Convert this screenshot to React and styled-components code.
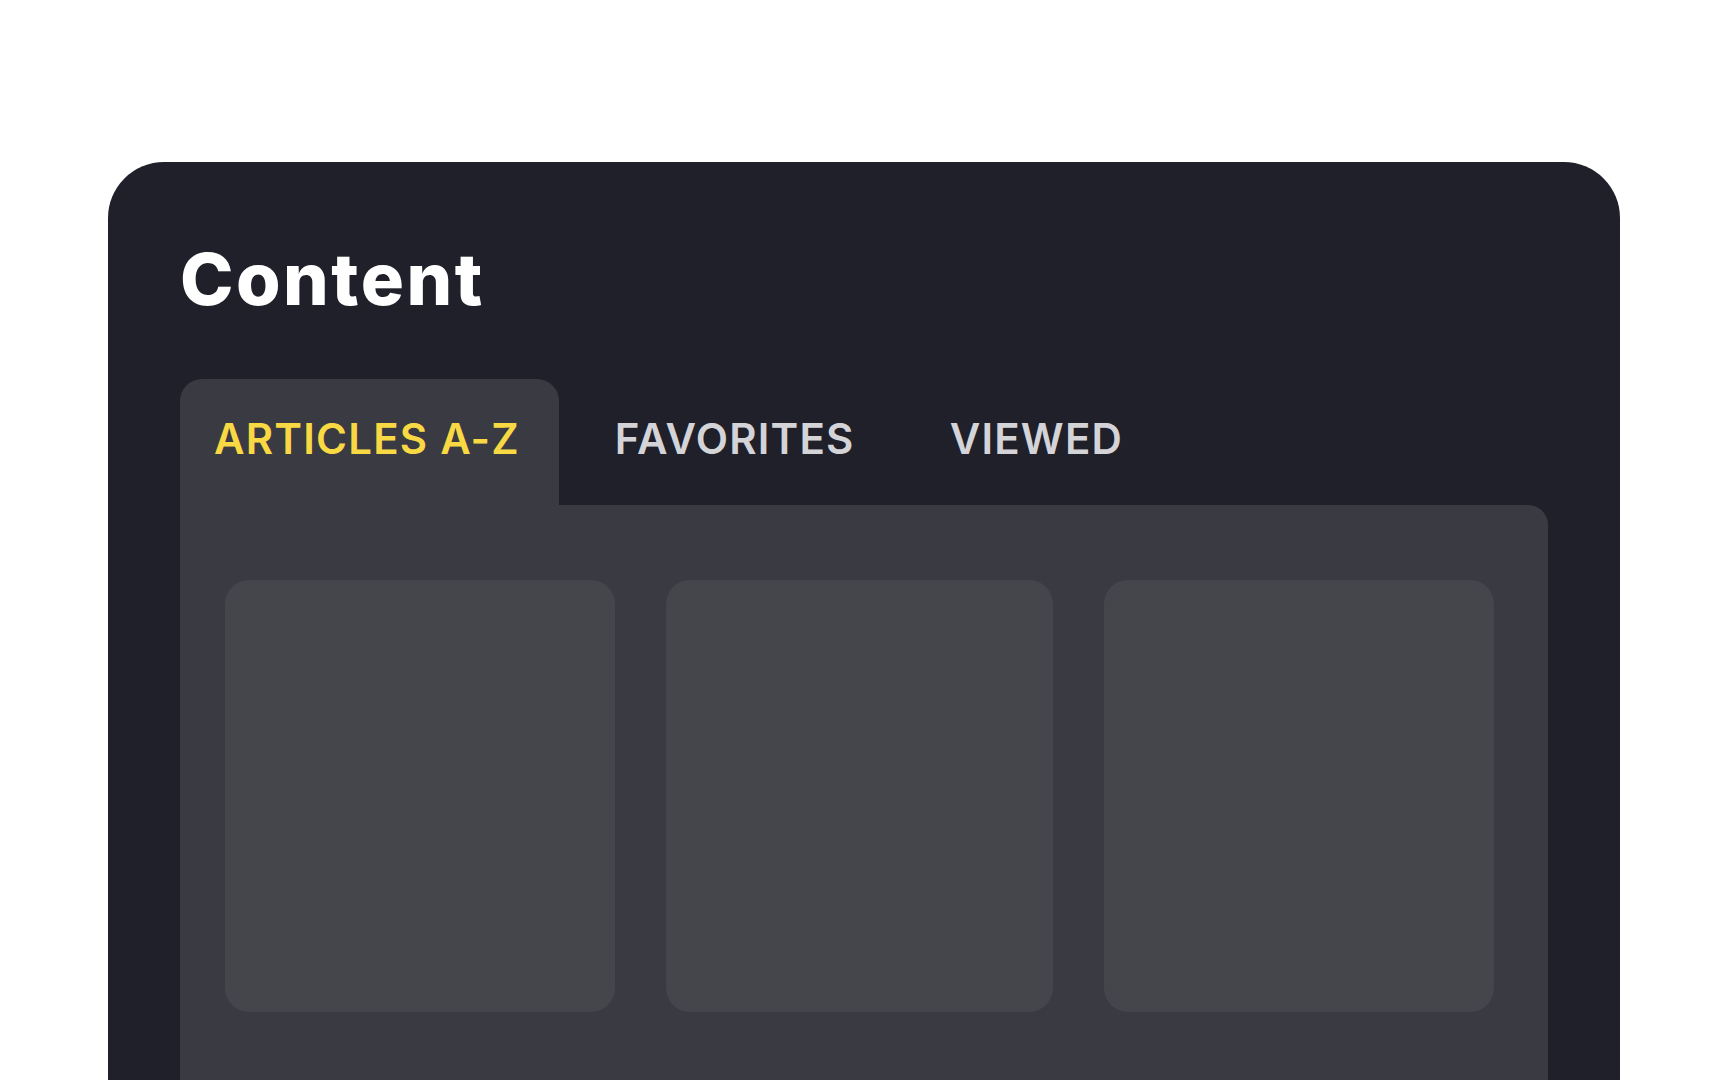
import React, { useState } from "react";
import styled, { createGlobalStyle } from "styled-components";

const GlobalStyle = createGlobalStyle`
  html, body {
    margin: 0;
    padding: 0;
    background: #ffffff;
    overflow: hidden;
  }
  body {
    font-family: Inter, "Noto Sans", "Liberation Sans", sans-serif;
  }
`;

const tabs = ["ARTICLES A-Z", "FAVORITES", "VIEWED"];

const Page = styled.div`
  padding: 162px 108px 0;
  height: 1080px;
  box-sizing: border-box;
`;

const Card = styled.section`
  background: #1f2029;
  border-radius: 56px 56px 0 0;
  padding: 81px 72px 0;
  min-height: 1000px;
  box-sizing: border-box;
`;

const Title = styled.h1`
  margin: 0;
  color: #ffffff;
  font-family: Inter, "Noto Sans", sans-serif;
  font-weight: 800;
  font-size: 72px;
  line-height: 72px;
  letter-spacing: 2.5px;
`;

const TabBar = styled.nav`
  display: flex;
  gap: 22px;
  margin-top: 64px;
`;

const Tab = styled.button`
  border: none;
  cursor: pointer;
  height: 126px;
  padding: 0 39px 8px 34px;
  border-radius: 22px 22px 0 0;
  background: ${(p) => (p.$active ? "#3a3a43" : "transparent")};
  color: ${(p) => (p.$active ? "#f8d943" : "#d4d4d8")};
  font-family: Inter, "Noto Sans", sans-serif;
  font-weight: 600;
  font-size: 42px;
  letter-spacing: 1.2px;
  display: flex;
  align-items: center;
`;

const Panel = styled.div`
  background: #3a3a43;
  border-radius: ${(p) => (p.$first ? "0 20px 0 0" : "20px 20px 0 0")};
  padding: 75px 54px 140px 45px;
  display: grid;
  grid-template-columns: 390px 387px 390px;
  justify-content: space-between;
`;

const Item = styled.div`
  height: 432px;
  background: #45464b;
  border-radius: 24px;
`;

export default function App() {
  const [active, setActive] = useState(0);
  return (
    <>
      <GlobalStyle />
      <Page>
        <Card>
          <Title>Content</Title>
          <TabBar>
            {tabs.map((t, i) => (
              <Tab key={t} $active={i === active} onClick={() => setActive(i)}>
                {t}
              </Tab>
            ))}
          </TabBar>
          <Panel $first={active === 0}>
            <Item />
            <Item />
            <Item />
          </Panel>
        </Card>
      </Page>
    </>
  );
}
